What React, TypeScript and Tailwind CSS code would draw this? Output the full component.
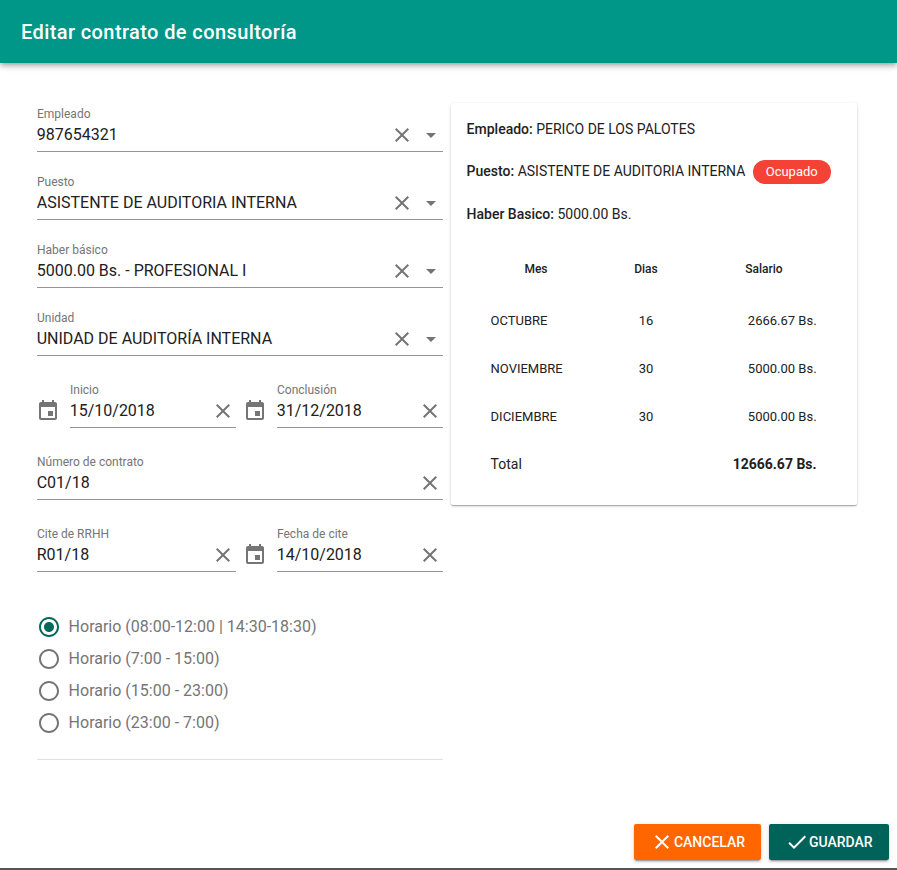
import React from 'react';

const CLEAR = 'M19 6.41L17.59 5 12 10.59 6.41 5 5 6.41 10.59 12 5 17.59 6.41 19 12 13.41 17.59 19 19 17.59 13.41 12z';
const EVENT = 'M17 12h-5v5h5v-5zM16 1v2H8V1H6v2H5c-1.11 0-1.99.9-1.99 2L3 19c0 1.1.89 2 2 2h14c1.1 0 2-.9 2-2V5c0-1.1-.9-2-2-2h-1V1h-2zm3 18H5V8h14v11z';
const DROP = 'M7 10l5 5 5-5z';
const CHECK = 'M9 16.17L4.83 12l-1.42 1.41L9 19 21 7l-1.41-1.41z';
const RADIO_ON = 'M12 7c-2.76 0-5 2.24-5 5s2.24 5 5 5 5-2.24 5-5-2.24-5-5-5zm0-5C6.48 2 2 6.48 2 12s4.48 10 10 10 10-4.48 10-10S17.52 2 12 2zm0 18c-4.42 0-8-3.58-8-8s3.58-8 8-8 8 3.58 8 8-3.58 8-8 8z';
const RADIO_OFF = 'M12 2C6.48 2 2 6.48 2 12s4.48 10 10 10 10-4.48 10-10S17.52 2 12 2zm0 18c-4.42 0-8-3.58-8-8s3.58-8 8-8 8 3.58 8 8-3.58 8-8 8z';

function Icon({ d, className }: { d: string; className?: string }) {
  return (
    <svg viewBox="0 0 24 24" fill="currentColor" className={'w-6 h-6 shrink-0 ' + (className ?? '')}>
      <path d={d} />
    </svg>
  );
}

function Field({ label, value, drop, className }: { label: string; value: string; drop?: boolean; className?: string }) {
  return (
    <div className={'min-w-0 ' + (className ?? '')}>
      <div className="text-xs leading-[14px] text-[#757575]">{label}</div>
      <div className="flex items-center h-[31px] border-b border-[#949494] text-[#212121]">
        <span className="flex-1 text-base leading-6 pb-[2px] -ml-[0.3px] truncate">{value}</span>
        <div className={'flex items-center text-[#757575] pb-[3px] ' + (drop ? '' : 'pr-[0.7px]')}>
          <Icon d={CLEAR} />
          {drop && <Icon d={DROP} className="ml-[4.7px]" />}
        </div>
      </div>
    </div>
  );
}

function Cal({ className }: { className?: string }) {
  return <Icon d={EVENT} className={'text-[#757575] mt-[16px] ' + (className ?? '')} />;
}

const months = [
  ['OCTUBRE', '16', '2666.67 Bs.'],
  ['NOVIEMBRE', '30', '5000.00 Bs.'],
  ['DICIEMBRE', '30', '5000.00 Bs.'],
];

const horarios = ['Horario (08:00-12:00 | 14:30-18:30)', 'Horario (7:00 - 15:00)', 'Horario (15:00 - 23:00)', 'Horario (23:00 - 7:00)'];

export default function App() {
  return (
    <div className="h-[870px] overflow-hidden flex flex-col bg-white font-['Roboto',sans-serif] border-b-2 border-[#555555]">
      <header className="h-[63px] shrink-0 bg-[#009688] flex items-center px-[21px] shadow-[0_2px_4px_-1px_rgba(0,0,0,.2),0_4px_5px_0_rgba(0,0,0,.14),0_1px_10px_0_rgba(0,0,0,.12)]">
        <h1 className="text-xl font-medium text-white tracking-[0.4px]">Editar contrato de consultoría</h1>
      </header>

      <main className="flex-1 flex gap-2 pl-[37px] pr-10 pt-10 min-h-0">
        <section className="w-[406px] shrink-0 pt-1">
          <div className="flex flex-col gap-[23px]">
            <Field label="Empleado" value="987654321" drop />
            <Field label="Puesto" value="ASISTENTE DE AUDITORIA INTERNA" drop />
            <Field label="Haber básico" value="5000.00 Bs. - PROFESIONAL I" drop />
            <Field label="Unidad" value="UNIDAD DE AUDITORÍA INTERNA" drop />
          </div>
          <div className="flex flex-col gap-[27px] mt-[27px]">
            <div className="flex">
              <Cal className="-ml-[1px] mr-[10px]" />
              <Field label="Inicio" value="15/10/2018" className="w-[166px]" />
              <Cal className="ml-[7px] mr-[10px]" />
              <Field label="Conclusión" value="31/12/2018" className="w-[166px]" />
            </div>
            <Field label="Número de contrato" value="C01/18" />
            <div className="flex">
              <Field label="Cite de RRHH" value="R01/18" className="w-[199px]" />
              <Cal className="ml-[7px] mr-[10px]" />
              <Field label="Fecha de cite" value="14/10/2018" className="w-[166px]" />
            </div>
          </div>
          <div className="mt-[39px] border-b border-[#e0e0e0] pb-[20px]">
            {horarios.map((h, i) => (
              <div key={h} className="flex items-center h-8 gap-[8.1px] text-base text-[#757575]">
                <Icon d={i === 0 ? RADIO_ON : RADIO_OFF} className={'-ml-[0.5px] ' + (i === 0 ? 'text-[#00695c]' : 'text-[#757575]')} />
                <span>{h}</span>
              </div>
            ))}
          </div>
        </section>

        <aside className="w-[406px] h-[402px] shrink-0 rounded-[2px] bg-white pl-[15.6px] pr-4 pt-4 text-sm text-[#212121] shadow-[0_1px_3px_0_rgba(0,0,0,.2),0_1px_1px_0_rgba(0,0,0,.14),0_2px_1px_-1px_rgba(0,0,0,.12)]">
          <p className="leading-5"><b className="font-medium">Empleado:</b> PERICO DE LOS PALOTES</p>
          <p className="flex items-center h-6 mt-5">
            <span><b className="font-medium">Puesto:</b> ASISTENTE DE AUDITORIA INTERNA</span>
            <span className="ml-[7.4px] mt-[2px] h-6 w-[78px] rounded-full bg-[#f44336] text-white text-[13px] leading-6 text-center">Ocupado</span>
          </p>
          <p className="leading-5 mt-[21px]"><b className="font-medium">Haber Basico:</b> 5000.00 Bs.</p>
          <table className="w-[374px] ml-[0.4px] mt-[19px] table-fixed border-collapse">
            <colgroup>
              <col className="w-[138px]" />
              <col className="w-[82px]" />
              <col className="w-[154px]" />
            </colgroup>
            <thead>
              <tr className="h-[54px] text-xs font-medium">
                <th className="font-medium text-center pb-[2px]">Mes</th>
                <th className="font-medium text-center pb-[2px]">Dias</th>
                <th className="font-medium text-center pb-[2px]">Salario</th>
              </tr>
            </thead>
            <tbody className="text-[13px]">
              {months.map((m) => (
                <tr key={m[0]} className="h-12">
                  <td className="pl-[23.6px]">{m[0]}</td>
                  <td className="text-center">{m[1]}</td>
                  <td className="text-right pr-[24.4px]">{m[2]}</td>
                </tr>
              ))}
              <tr className="h-12">
                <td className="pl-[23.6px] pb-[2px] text-sm">Total</td>
                <td />
                <td className="text-right pr-[24.4px] pb-[2px] text-sm font-bold">12666.67 Bs.</td>
              </tr>
            </tbody>
          </table>
        </aside>
      </main>

      <footer className="shrink-0 flex justify-end gap-2 pr-2 pb-2">
        <button className="h-9 w-[127px] rounded-[2px] bg-[#ff6600] text-white text-sm font-medium flex items-center justify-center shadow-[0_3px_1px_-2px_rgba(0,0,0,.2),0_2px_2px_0_rgba(0,0,0,.14),0_1px_5px_0_rgba(0,0,0,.12)]">
          <Icon d={CLEAR} />
          <span>CANCELAR</span>
        </button>
        <button className="h-9 w-[120px] rounded-[2px] bg-[#00635a] text-white text-sm font-medium flex items-center justify-center shadow-[0_3px_1px_-2px_rgba(0,0,0,.2),0_2px_2px_0_rgba(0,0,0,.14),0_1px_5px_0_rgba(0,0,0,.12)]">
          <Icon d={CHECK} />
          <span className="-ml-[0.5px]">GUARDAR</span>
        </button>
      </footer>
    </div>
  );
}
